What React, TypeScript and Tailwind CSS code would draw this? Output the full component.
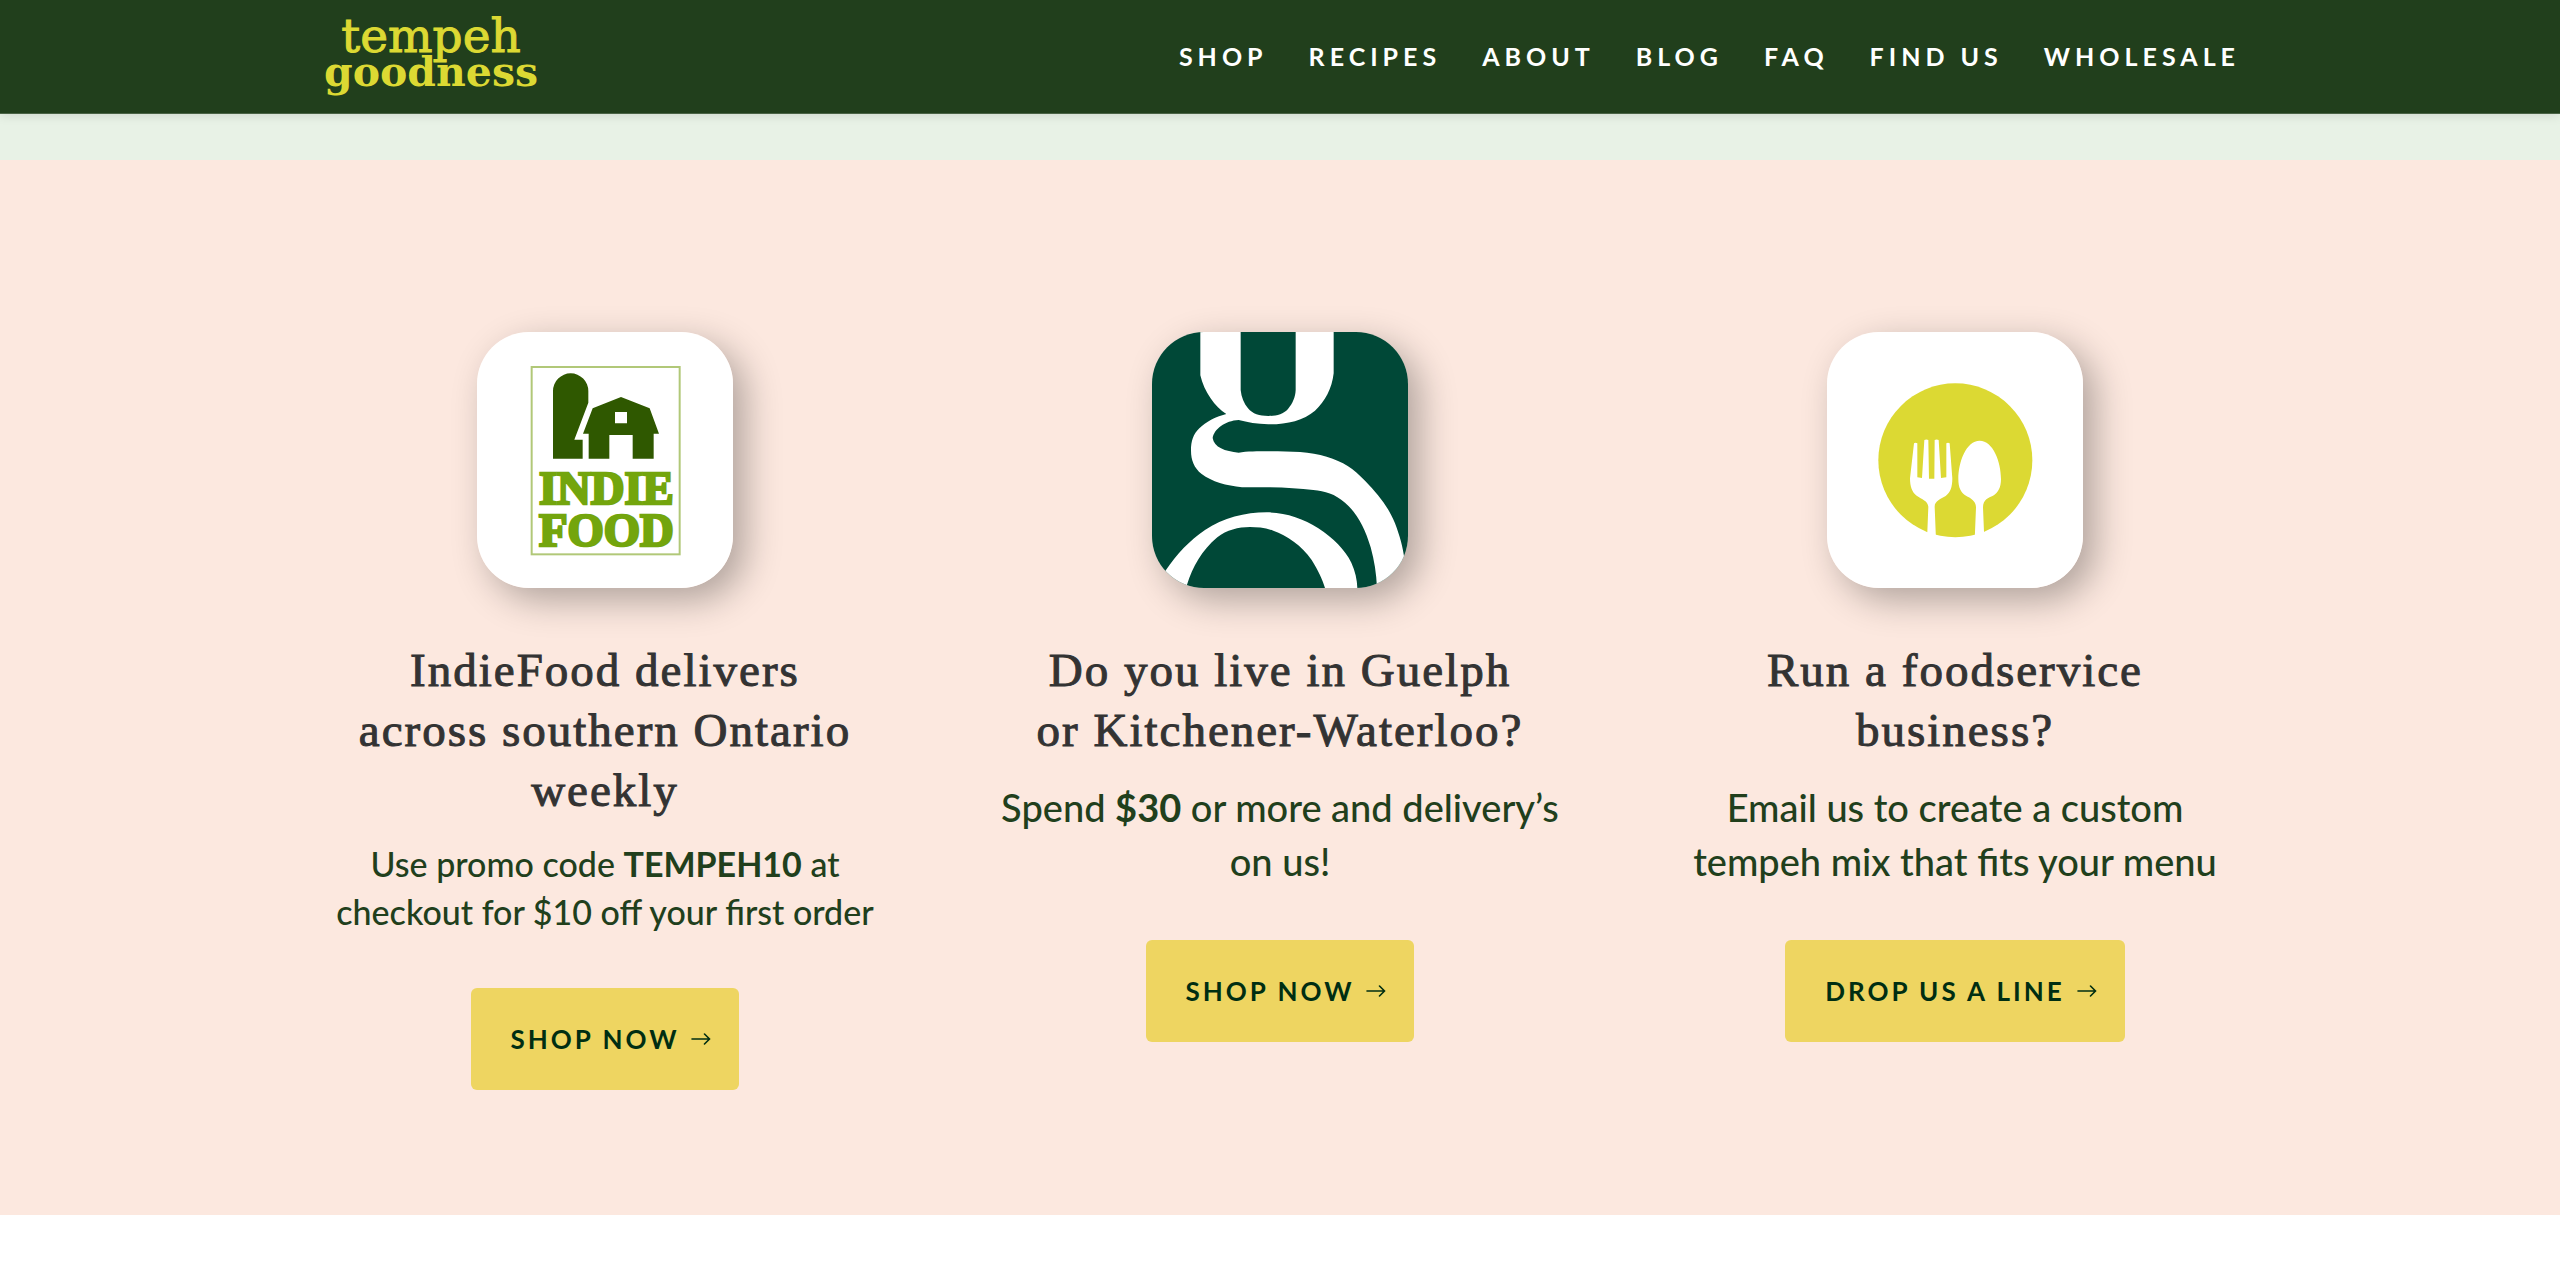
import type { ReactNode } from "react";

const NAV = ["Shop", "Recipes", "About", "Blog", "FAQ", "Find us", "Wholesale"];

function Header() {
  return (
    <header className="relative z-10 border-b border-[#4a6345] bg-[#213f1c] shadow-[0_2px_10px_rgba(0,0,0,0.1)]">
      <div className="mx-auto flex h-[113px] w-3/4 items-center justify-between">
        <a
          href="#home"
          className="ml-1 flex flex-col items-center pb-1.5 font-['DejaVu_Serif',serif] text-[#dcd933]"
        >
          <span className="text-[47px] leading-9 [-webkit-text-stroke:1px_#dcd933]">tempeh</span>
          <span className="text-[41px] font-bold leading-9">goodness</span>
        </a>
        <nav className="flex gap-[41px]">
          {NAV.map((label) => (
            <a
              key={label}
              href={"#" + label.toLowerCase().replace(" ", "-")}
              className="font-['Lato',sans-serif] text-[25px] font-bold uppercase tracking-[5px] text-white"
            >
              {label}
            </a>
          ))}
        </nav>
      </div>
    </header>
  );
}

function IndieFoodIcon() {
  return (
    <svg viewBox="80 66 768 768" className="size-full" role="img" aria-label="Indie Food">
      <rect x="80" y="66" width="768" height="768" fill="#fff" />
      <rect x="244" y="171" width="444" height="562" fill="none" stroke="#b1c878" strokeWidth="6" />
      <path
        d="M308 446V243a53 53 0 0 1 106 0V278L372 389H397V446Z"
        fill="#2f5800"
      />
      <path
        fillRule="evenodd"
        d="M512 261L598 295L626 371H610V446H547V375H477V446H415V371H398L427 295ZM494 306V340H530V306Z"
        fill="#2f5800"
      />
      <g
        fill="#73a50d"
        stroke="#73a50d"
        strokeWidth="8"
        textAnchor="middle"
        fontFamily="Liberation Serif, serif"
        fontWeight="700"
        fontSize="140"
      >
        <text x="468" y="583">INDIE</text>
        <text x="468" y="709">FOOD</text>
      </g>
    </svg>
  );
}

function GIcon() {
  return (
    <svg viewBox="66 66 768 768" className="size-full" role="img" aria-label="G">
      <rect x="66" y="66" width="768" height="768" fill="#004837" />
      <path
        fill="#fff"
        fillRule="evenodd"
        d="M211 66H611V190C606 235 585 275 555 302C520 332 470 343 415 343C382 342 352 337 326 330C285 332 252 358 248 384C252 412 285 424 326 428C350 424 385 424 415 424C480 424 540 425 590 440C640 455 670 475 705 512C745 553 775 590 795 640C810 680 818 710 823 745L834 834H741C739 790 733 752 722 712C705 655 682 610 645 578C615 552 585 543 550 540C510 536 465 532 415 532H336C290 527 245 515 215 492C192 473 183 450 183 422C183 393 190 372 208 355C228 335 255 321 289 312C255 291 222 245 211 196ZM332 66V240C334 262 342 280 354 295C368 312 388 318 415 318C440 318 460 312 474 297C488 280 496 262 497 240V66Z"
      />
      <path
        fill="#fff"
        d="M66 834C80 815 95 798 108 780C140 733 180 690 225 660C280 624 345 607 410 607C465 607 520 625 565 655C610 684 645 720 664 758C676 785 681 808 682 834H585C578 810 565 782 545 750C515 705 470 677 430 662C405 653 380 651 360 651C325 651 290 660 262 682C215 722 188 770 171 824L168 834Z"
      />
    </svg>
  );
}

function CutleryIcon() {
  return (
    <svg viewBox="80 66 768 768" className="size-full" role="img" aria-label="Fork and spoon">
      <rect x="80" y="66" width="768" height="768" fill="#fff" />
      <circle cx="465" cy="451" r="231" fill="#dcd933" />
      <g fill="#fff">
        <path d="M341 400Q346 397 351 400V502L365 504L372 390Q378 387 384 390L386 506H402L403 390Q409 387 415 390L422 504L438 502V400Q443 397 448 400L456 505C456 532 450 548 436 558C422 567 403 572 403 590L407 690H380L384 590C382 572 365 568 349 557C335 547 329 530 329 505Z" />
        <path d="M538 392C578 392 602 455 602 507C602 532 594 548 578 557C565 563 548 568 548 592L552 690H523L527 592C527 572 510 564 497 557C481 548 474 532 474 507C474 455 498 392 538 392Z" />
      </g>
    </svg>
  );
}

function CtaButton({ children }: { children: ReactNode }) {
  return (
    <button
      type="button"
      className="mt-13 flex h-[102px] items-center gap-3 rounded-md bg-[#eed561] pl-10 pr-7 font-['Lato',sans-serif] text-[26px] font-bold uppercase tracking-[3px] text-[#002e12]"
    >
      {children}
      <svg viewBox="0 0 20 12" className="h-3 w-5" fill="none" stroke="currentColor" strokeWidth="1.6" strokeLinecap="round" aria-hidden="true">
        <path d="M1 6H18.500M13.500 1L18.500 6L13.500 11" />
      </svg>
    </button>
  );
}

type CardProps = {
  icon: ReactNode;
  title: ReactNode;
  textClass: string;
  text: ReactNode;
  action: string;
};

function Card({ icon, title, textClass, text, action }: CardProps) {
  return (
    <article className="flex flex-col items-center text-center">
      <div className="size-64 overflow-hidden rounded-[52px] shadow-[12px_12px_36px_rgba(0,0,0,0.3)]">{icon}</div>
      <h2 className="mt-[52px] font-['Liberation_Serif',serif] text-[47px] leading-[60px] tracking-[2px] text-[#333] [-webkit-text-stroke:1px_#333]">
        {title}
      </h2>
      <p className={"mt-5 font-['Lato',sans-serif] font-medium text-[#213f1c] " + textClass}>{text}</p>
      <CtaButton>{action}</CtaButton>
    </article>
  );
}

export default function App() {
  return (
    <div className="bg-white pb-12">
      <Header />
      <div className="h-[46px] bg-[#e8f2e6]" />
      <main className="bg-[#fce8df] pt-[172px] pb-[125px]">
        <div className="mx-auto grid w-3/4 grid-cols-3 gap-[105px]">
          <Card
            icon={<IndieFoodIcon />}
            title={<>IndieFood delivers<br />across southern Ontario<br />weekly</>}
            textClass="text-[34px] leading-[48px]"
            text={<>Use promo code <strong>TEMPEH10</strong> at<br />checkout for $10 off your first order</>}
            action="Shop now"
          />
          <Card
            icon={<GIcon />}
            title={<>Do you live in Guelph<br />or Kitchener-Waterloo?</>}
            textClass="text-[38px] leading-[54px]"
            text={<>Spend <strong>$30</strong> or more and delivery’s<br />on us!</>}
            action="Shop now"
          />
          <Card
            icon={<CutleryIcon />}
            title={<>Run a foodservice<br />business?</>}
            textClass="text-[38px] leading-[54px]"
            text={<>Email us to create a custom<br />tempeh mix that fits your menu</>}
            action="Drop us a line"
          />
        </div>
      </main>
    </div>
  );
}
